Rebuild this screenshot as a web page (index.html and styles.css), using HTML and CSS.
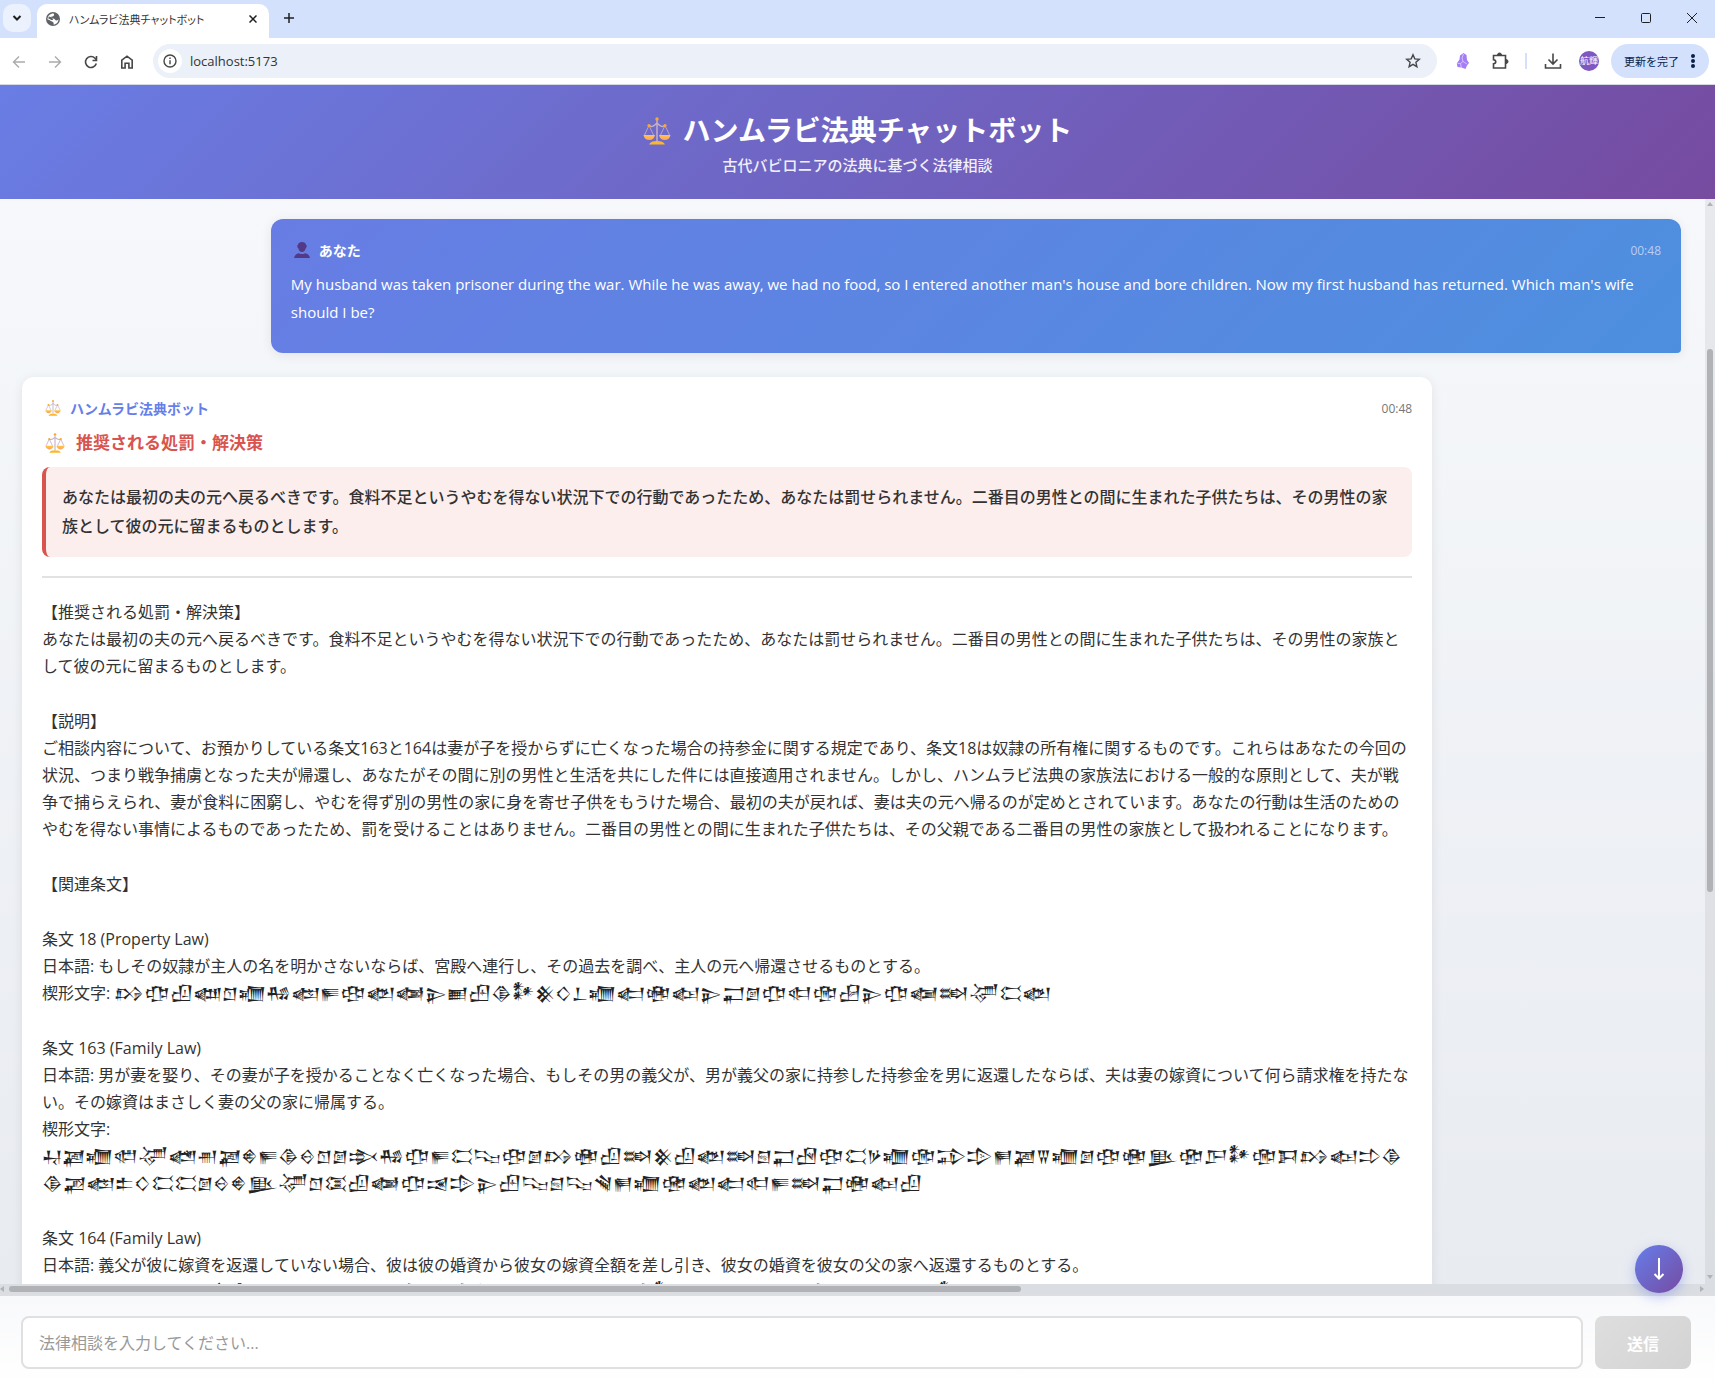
FILE: index.html
```
<!DOCTYPE html>
<html lang="ja">
  <head>
    <meta charset="UTF-8" />
    <meta name="viewport" content="width=device-width, initial-scale=1.0" />
    <title>ハンムラビ法典チャットボット</title>
    <link rel="stylesheet" href="styles.css">
  </head>
  <body>
    <!-- shared drawings -->
    <svg class="defs" aria-hidden="true">
      <defs>
        <linearGradient id="gold" x1="0" y1="0" x2="0" y2="1">
          <stop offset="0" stop-color="#ffc83d" />
          <stop offset="1" stop-color="#ff9f6b" />
        </linearGradient>
        <symbol id="scales" viewBox="0 0 28 28">
          <path d="M6 8.5 1.5 18M6 8.5 10.5 18M22 8.5 17.5 18M22 8.5 26.5 18" fill="none" stroke="#b9a3c4" />
          <path d="M6 8.5c3 2 5 .5 8-2.500 3 3 5 4.500 8 2.500M14 2v22" fill="none" stroke="#c3b0c6" stroke-width="1.500" />
          <path d="M.5 18h11.500c-.5 3-2.500 5-5.750 5S1 21 .5 18zM16 18h11.500c-.5 3-2.500 5-5.750 5s-5.250-2-5.750-5z" fill="url(#gold)" />
          <path d="M6 27.500c1-2.500 4-3.500 8-3.500s7 1 8 3.500z" fill="#fbb72c" />
          <circle cx="14" cy="1.900" r="1.700" fill="#f9a92f" />
          <circle cx="6" cy="8.500" r="1.600" fill="#f9a92f" />
          <circle cx="22" cy="8.500" r="1.600" fill="#f9a92f" />
        </symbol>
      </defs>
    </svg>

    <div class="browser">
      <div class="tab-strip">
        <button class="tab-search" aria-label="タブを検索">
          <svg width="10" height="10" viewBox="0 0 10 10"><path d="M1.500 3 5 6.500 8.500 3" /></svg>
        </button>
        <div class="tab">
          <svg width="14" height="14" viewBox="0 0 14 14">
            <circle cx="7" cy="7" r="7" fill="#5f6368" />
            <path d="M7.500 1.500C9 3 7.500 4.500 6 4.500S5 6.500 7 6.500s2 2 3.500 2 1.500-1 2-1.500c0 3-2 5.500-5 5.500.5-1.500 0-2.500-1.500-3S3 7.500 1.500 7.500C1.500 4 4 1.500 7.500 1.500z" fill="#fff" />
            <path d="M2.500 5.500c2 .5 3.500 1 3.500 2.500" fill="none" stroke="#5f6368" stroke-width="2" />
          </svg>
          <span class="tab-title">ハンムラビ法典チャットボット</span>
          <button class="tab-close" aria-label="閉じる">
            <svg width="8" height="8" viewBox="0 0 8 8"><path d="M.5.5l7 7M7.500.5l-7 7" /></svg>
          </button>
        </div>
        <button class="tab-new" aria-label="新しいタブ">
          <svg width="10" height="10" viewBox="0 0 10 10"><path d="M5 0v10M0 5h10" /></svg>
        </button>
        <div class="window-controls">
          <button aria-label="最小化"><svg width="10" height="10" viewBox="0 0 10 10"><path d="M0 4.500h10" /></svg></button>
          <button aria-label="最大化"><svg width="10" height="10" viewBox="0 0 10 10"><rect x=".5" y=".5" width="9" height="9" rx="1" /></svg></button>
          <button aria-label="閉じる"><svg width="10" height="10" viewBox="0 0 10 10"><path d="M0 0l10 10M10 0 0 10" /></svg></button>
        </div>
      </div>

      <div class="toolbar">
        <button class="nav-btn off" aria-label="戻る"><svg width="16" height="16" viewBox="0 0 16 16"><path d="M14 8H3M8 2.500 2.500 8 8 13.500" /></svg></button>
        <button class="nav-btn off" aria-label="進む"><svg width="16" height="16" viewBox="0 0 16 16"><path d="M2 8h11M8 2.500 13.500 8 8 13.500" /></svg></button>
        <button class="nav-btn" aria-label="再読み込み"><svg width="16" height="16" viewBox="0 0 16 16"><path d="M13.300 9.500A5.500 5.500 0 1 1 12 4.200L13.800 6M13.500 2v4.500H9.500" /></svg></button>
        <button class="nav-btn" aria-label="ホーム"><svg width="16" height="16" viewBox="0 0 16 16"><path d="M2.800 14V6.200L8 2.200l5.200 4V14H9.900V9.200H6.100V14z" /></svg></button>
        <div class="omnibox">
          <span class="site-info">
            <svg width="14" height="14" viewBox="0 0 14 14"><circle cx="7" cy="7" r="6" /><path d="M7 6.300v4M7 3.500v1.500" /></svg>
          </span>
          <input class="url" type="text" value="localhost:5173" aria-label="アドレス" />
          <svg class="star" width="16" height="16" viewBox="0 0 16 16"><path d="m8 1.800 1.800 4.100 4.500.4-3.400 3 1 4.400L8 11.400l-3.900 2.300 1-4.400-3.400-3 4.500-.4z" /></svg>
        </div>
        <div class="extensions">
          <svg width="14" height="16" viewBox="0 0 14 16">
            <path d="M7.500 0 4 2.500 3.500 6.500.8 10.500 1.500 14l4 .5 4 1.500 1.500-3.500 2-2.500-2-3-.5-5z" fill="#a47cf5" />
            <path d="m7.500 1-1.500 4 1 3.500-2.500 2M7 8.500l4 2.500M4.500 10.500l1 4.500M1.500 10.500l3 0" fill="none" stroke="#e0d2ff" stroke-width=".8" />
          </svg>
          <svg class="line-icon" width="18" height="18" viewBox="0 0 18 18"><path d="M2.500 3.500h12v12.500h-12v-4.200c3-.3 3-3.800 0-4.100z" /><path d="M6.500 3a2 2 0 0 1 4 0zM15 7.500a2 2 0 0 1 0 4z" fill="#474747" stroke-width="1" /></svg>
          <span class="divider"></span>
          <svg class="line-icon" width="18" height="18" viewBox="0 0 18 18"><path d="M9 1.500v10M4.500 7.500 9 12l4.500-4.500M1.500 12v4h15v-4" /></svg>
          <span class="avatar">航輝</span>
          <button class="update-btn">更新を完了
            <svg width="4" height="16" viewBox="0 0 4 16"><circle cx="2" cy="3" r="2" /><circle cx="2" cy="8" r="2" /><circle cx="2" cy="13" r="2" /></svg>
          </button>
        </div>
      </div>
    </div>

    <header class="app-header">
      <h1><svg width="28" height="28"><use href="#scales" /></svg>ハンムラビ法典チャットボット</h1>
      <p>古代バビロニアの法典に基づく法律相談</p>
    </header>

    <main class="chat">
      <div class="messages">
        <article class="message user">
          <div class="message-header">
            <svg width="16" height="16" viewBox="0 0 16 16">
              <path d="M4 3c0-4 8-4 8 0 1.200 0 .8 2.500-.2 3-.6 2.500-1.800 4-3.800 4S4.800 8.500 4.200 6C3.200 5.500 2.800 3 4 3z" fill="#523a86" />
              <path d="M0 16c1-3.500 3-4.500 5-4.800 2 1.200 4 1.200 6 0 2 .3 4 1.300 5 4.800z" fill="#523a86" />
            </svg>
            <strong>あなた</strong>
            <time>00:48</time>
          </div>
          <p>My husband was taken prisoner during the war. While he was away, we had no food, so I entered another man's house and bore children. Now my first husband has returned. Which man's wife should I be?</p>
        </article>

        <article class="message bot">
          <div class="message-header">
            <svg width="16" height="16"><use href="#scales" /></svg>
            <strong>ハンムラビ法典ボット</strong>
            <time>00:48</time>
          </div>
          <h2><svg width="20" height="20"><use href="#scales" /></svg>推奨される処罰・解決策</h2>
          <div class="punishment">あなたは最初の夫の元へ戻るべきです。食料不足というやむを得ない状況下での行動であったため、あなたは罰せられません。二番目の男性との間に生まれた子供たちは、その男性の家族として彼の元に留まるものとします。</div>
          <div class="answer">
            <p>【推奨される処罰・解決策】<br />あなたは最初の夫の元へ戻るべきです。食料不足というやむを得ない状況下での行動であったため、あなたは罰せられません。二番目の男性との間に生まれた子供たちは、その男性の家族として彼の元に留まるものとします。</p>
            <p>【説明】<br />ご相談内容について、お預かりしている条文163と164は妻が子を授からずに亡くなった場合の持参金に関する規定であり、条文18は奴隷の所有権に関するものです。これらはあなたの今回の状況、つまり戦争捕虜となった夫が帰還し、あなたがその間に別の男性と生活を共にした件には直接適用されません。しかし、ハンムラビ法典の家族法における一般的な原則として、夫が戦争で捕らえられ、妻が食料に困窮し、やむを得ず別の男性の家に身を寄せ子供をもうけた場合、最初の夫が戻れば、妻は夫の元へ帰るのが定めとされています。あなたの行動は生活のためのやむを得ない事情によるものであったため、罰を受けることはありません。二番目の男性との間に生まれた子供たちは、その父親である二番目の男性の家族として扱われることになります。</p>
            <p>【関連条文】</p>
            <p>条文 18 (Property Law)<br />日本語: もしその奴隷が主人の名を明かさないならば、宮殿へ連行し、その過去を調べ、主人の元へ帰還させるものとする。<br />楔形文字: <span class="cuneiform">𒋳𒂡𒌺𒅘𒇕𒁾𒄀𒅠𒊓𒂦𒅥𒅲𒉌𒆤𒍂𒆠𒀯𒆜𒄭𒁇𒁾𒅗𒂧𒅴𒉌𒂷𒇖𒂡𒊕𒂢𒌻𒉌𒂡𒅱𒇷𒋚𒀫𒅥</span></p>
            <p>条文 163 (Family Law)<br />日本語: 男が妻を娶り、その妻が子を授かることなく亡くなった場合、もしその男の義父が、男が義父の家に持参した持参金を男に返還したならば、夫は妻の嫁資について何ら請求権を持たない。その嫁資はまさしく妻の父の家に帰属する。<br />楔形文字:<br /><span class="cuneiform">𒄷𒃀𒁾𒊖𒋚𒅤𒉣𒃀𒄯𒊓𒆠𒄰𒇕𒇖𒇸𒄀𒂡𒊓𒀫𒌫𒂦𒇖𒋳𒂧𒌺𒇷𒆜𒌺𒅥𒇷𒇗𒂷𒌾𒂦𒀫𒃻𒁾𒂢𒁉𒄠𒂍𒃀𒐊𒁾𒇖𒂦𒂧𒆥𒂣𒂅𒀯𒂢𒁕𒋳𒅴𒄞𒆠</span><br /><span class="cuneiform">𒆠𒃁𒅠𒉺𒄭𒀫𒀫𒇖𒄰𒄯𒆥𒋚𒇕𒀬𒌺𒅲𒂡𒀔𒄠𒉌𒍂𒌫𒇗𒌫𒃸𒂍𒁾𒂤𒅥𒅗𒊕𒊓𒇷𒂷𒂧𒅴𒌺</span></p>
            <p>条文 164 (Family Law)<br />日本語: 義父が彼に嫁資を返還していない場合、彼は彼の婚資から彼女の嫁資全額を差し引き、彼女の婚資を彼女の父の家へ返還するものとする。<br />楔形文字: <span class="cuneiform">𒄷𒂢𒁾𒊖𒋚𒅤𒉣𒄯𒆠𒇕𒂡𒀫𒌻𒋳𒌺𒃸𒅥𒂷𒂧𒅴𒇷𒌻𒀯𒅲𒁾𒂡𒇖𒅥𒌺𒊓𒆠𒄯𒂷𒅠𒀯𒅗</span></p>
          </div>
        </article>
      </div>
      <div class="scroll-y"><i class="arrow up"></i><span class="thumb"></span><i class="arrow down"></i></div>
      <div class="scroll-x"><i class="arrow left"></i><span class="thumb"></span><i class="arrow right"></i></div>
      <button class="to-bottom" aria-label="一番下へ">
        <svg width="12" height="22" viewBox="0 0 12 22"><path d="M6 0v20M1.500 16 6 20.500l4.500-4.500" /></svg>
      </button>
    </main>

    <form class="composer">
      <input type="text" placeholder="法律相談を入力してください..." aria-label="法律相談" />
      <button type="submit" disabled>送信</button>
    </form>
  </body>
</html>
```
FILE: styles.css
```
* {
  box-sizing: border-box;
  margin: 0;
  padding: 0;
}
body {
  display: flex;
  flex-direction: column;
  height: 100vh;
  overflow: hidden;
  font-family: "Open Sans", "Noto Sans CJK JP", sans-serif;
  font-size: 16px;
  color: #333;
}
button {
  border: none;
  background: none;
  font-family: inherit;
}
svg {
  flex: none;
}
.defs {
  position: absolute;
  width: 0;
  height: 0;
}

/* browser window */
.tab-strip {
  display: flex;
  align-items: flex-end;
  height: 38px;
  padding-left: 3px;
  background: #d3e1fc;
}
.tab-strip button {
  display: flex;
  align-items: center;
  justify-content: center;
}
.tab-strip button svg {
  fill: none;
  stroke: #1f1f1f;
}
.tab-strip .tab-search {
  width: 28px;
  height: 28px;
  margin: 0 6px 6px 0;
  border-radius: 10px;
  background: #ebf2fe;
}
.tab-search svg {
  stroke-width: 2;
}
.tab-close svg,
.tab-new svg {
  stroke-width: 1.5;
}
.tab {
  display: flex;
  align-items: center;
  gap: 9px;
  width: 232px;
  height: 34px;
  padding: 0 8px 4px 9px;
  border-radius: 10px 10px 0 0;
  background: #fff;
}
.tab-title {
  flex: 1;
  overflow: hidden;
  font-size: 11px;
  font-feature-settings: "palt";
  white-space: nowrap;
}
.tab-close {
  width: 16px;
  height: 16px;
}
.tab-new {
  width: 28px;
  height: 28px;
  margin: 0 0 6px 6px;
}
.window-controls {
  display: flex;
  align-self: flex-start;
  height: 36px;
  margin-left: auto;
}
.window-controls button {
  width: 46px;
}
.toolbar {
  display: flex;
  align-items: center;
  height: 47px;
  padding: 0 6px 0 1px;
  border-bottom: 1px solid #d5d9e2;
  background: #fff;
}
.nav-btn {
  width: 36px;
  height: 34px;
}
.nav-btn svg,
.line-icon,
.star,
.site-info svg {
  fill: none;
  stroke: #474747;
  stroke-width: 1.6;
  vertical-align: middle;
}
.nav-btn.off svg {
  stroke: #ababab;
  stroke-width: 1.4;
}
.omnibox {
  display: flex;
  flex: 1;
  align-items: center;
  height: 34px;
  margin-left: 8px;
  padding: 0 16px 0 5px;
  border-radius: 17px;
  background: #ebf0f9;
}
.site-info {
  display: flex;
  align-items: center;
  justify-content: center;
  width: 24px;
  height: 24px;
  border-radius: 50%;
  background: #fff;
}
.site-info svg,
.star {
  stroke-width: 1.4;
}
.url {
  flex: 1;
  margin-left: 8px;
  border: none;
  outline: none;
  background: none;
  font: 13px "Open Sans", sans-serif;
  color: #333;
}
.extensions {
  display: flex;
  align-items: center;
  margin-left: 19px;
}
.line-icon {
  margin-left: 21px;
}
.divider {
  width: 2px;
  height: 16px;
  margin-left: 16px;
  background: #d3e1fc;
}
.divider + .line-icon {
  margin-left: 17px;
}
.avatar {
  width: 20px;
  margin-left: 17px;
  border-radius: 50%;
  background: #7e57c2;
  font-size: 9px;
  line-height: 20px;
  text-align: center;
  color: #fff;
}
.update-btn {
  display: flex;
  align-items: center;
  gap: 12px;
  height: 34px;
  margin-left: 12px;
  padding: 0 14px 0 13px;
  border-radius: 17px;
  background: #d3e1fc;
  font-size: 11px;
  color: #0a1f4a;
}
.update-btn svg {
  fill: #0a1f4a;
}

/* app header */
.app-header {
  padding: 24px 16px;
  background: linear-gradient(135deg, #697de4 0%, #764ba0 100%);
  text-align: center;
  color: #fff;
}
.app-header h1 {
  display: flex;
  align-items: center;
  justify-content: center;
  gap: 12px;
  font-size: 28px;
  line-height: 43px;
}
.app-header p {
  margin-top: 4px;
  font-size: 15px;
  font-weight: 500;
  line-height: 19px;
  opacity: 0.9;
}

/* chat */
.chat {
  position: relative;
  display: grid;
  flex: 1;
  grid-template-columns: minmax(0, 1fr) 10px;
  grid-template-rows: minmax(0, 1fr) 10px;
  min-height: 0;
  background: linear-gradient(180deg, #f6f8fb 0%, #e8ebf0 100%);
}
.messages {
  display: flex;
  flex-direction: column;
  gap: 24px;
  padding: 20px 24px 0 22px;
  overflow: hidden;
}
.message {
  flex: none;
  width: 85%;
  padding: 20px;
  border-radius: 12px;
  box-shadow: 0 2px 12px rgba(0, 0, 0, 0.08);
}
.message-header {
  display: flex;
  align-items: center;
  gap: 9px;
  height: 22px;
  padding-left: 3px;
  font-size: 14px;
}
.message-header time {
  margin-left: auto;
  font-size: 12px;
  color: #777;
}
.user {
  align-self: flex-end;
  padding-bottom: 27px;
  border-bottom-right-radius: 4px;
  background: linear-gradient(135deg, #687de4 0%, #4d8fdf 100%);
  color: #fff;
}
.user .message-header time {
  color: #b9cdf4;
}
.user p {
  margin-top: 9px;
  font-size: 15px;
  line-height: 28px;
}
.bot {
  background: #fff;
}
.bot strong {
  color: #667eea;
}
.bot h2 {
  display: flex;
  align-items: center;
  gap: 11px;
  margin-top: 10px;
  padding-left: 3px;
  font-size: 17px;
  line-height: 27px;
  color: #d9534f;
}
.punishment {
  margin-top: 11px;
  padding: 16px;
  border-left: 4px solid #d9534f;
  border-radius: 8px;
  background: #fceeed;
  font-weight: 500;
  line-height: 29px;
}
.answer {
  display: flex;
  flex-direction: column;
  gap: 28px;
  margin-top: 19px;
  padding-top: 21px;
  border-top: 2px solid #e2e2e2;
  line-height: 27px;
}
.cuneiform {
  color: #222;
}

/* scrollbars */
.scroll-y,
.scroll-x {
  position: relative;
  display: flex;
  align-items: center;
  background: rgba(0, 0, 0, 0.06);
}
.scroll-y {
  flex-direction: column;
}
.scroll-x {
  grid-column: 1 / -1;
}
.thumb {
  border-radius: 3px;
  background: #b0b2b5;
}
.scroll-y .thumb {
  width: 6px;
  height: 50%;
  margin-top: 143px;
}
.scroll-x .thumb {
  width: 59%;
  height: 6px;
  margin-left: 5px;
}
.arrow {
  border: 3px solid transparent;
}
.up {
  border-bottom: 4px solid #b0b2b5;
}
.down {
  margin-top: auto;
  margin-bottom: 2px;
  border-top: 4px solid #b0b2b5;
}
.left {
  border-left: none;
  border-right: 4px solid #b0b2b5;
}
.right {
  margin-left: auto;
  margin-right: 11px;
  border-right: none;
  border-left: 4px solid #b0b2b5;
}
.to-bottom {
  position: absolute;
  right: 32px;
  bottom: 1px;
  width: 48px;
  height: 48px;
  border-radius: 50%;
  background: linear-gradient(135deg, #667eea 0%, #764ba2 100%);
  box-shadow: 0 4px 12px rgba(102, 126, 234, 0.4);
}
.to-bottom svg {
  margin-top: 4px;
  fill: none;
  stroke: #fff;
  stroke-width: 2;
}

/* input */
.composer {
  display: flex;
  gap: 12px;
  padding: 20px 24px 16px 21px;
  border-top: 2px solid #dcdee1;
  background: linear-gradient(180deg, #f8f9fb 0%, #fff 100%);
}
.composer input {
  flex: 1;
  height: 53px;
  padding: 0 16px;
  border: 2px solid #e0e0e0;
  border-radius: 8px;
  background: #fff;
  font: inherit;
}
.composer input::placeholder {
  color: #999;
}
.composer button {
  width: 96px;
  border-radius: 8px;
  background: linear-gradient(135deg, #dedede 0%, #d3d3d3 100%);
  font-size: 16px;
  font-weight: 700;
  color: #fff;
}
```
